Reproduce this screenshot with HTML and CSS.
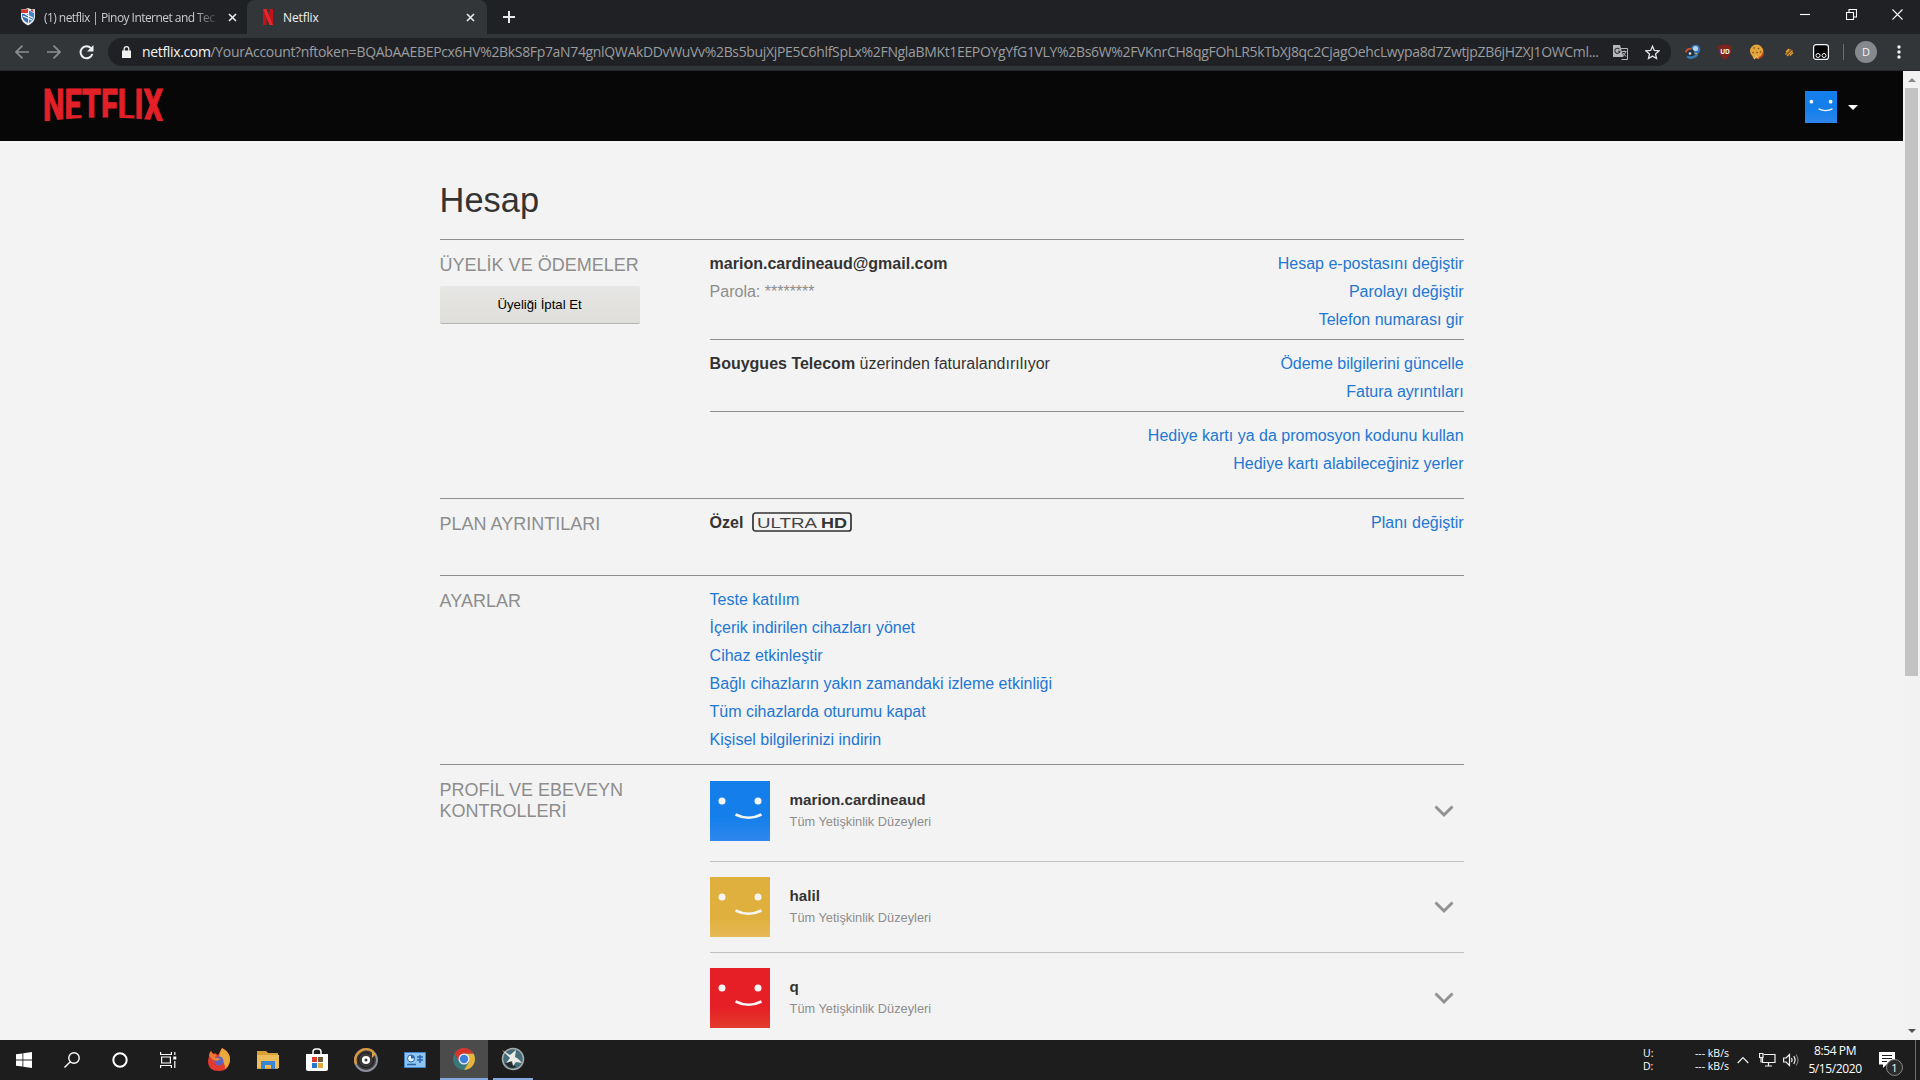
FILE: index.html
```html
<!DOCTYPE html>
<html lang="tr">
<head>
    <meta charset="UTF-8">
    <title>Netflix</title>
    <link rel="stylesheet" href="styles.css">
</head>
<body>
    <!-- tabs -->
    <div class="tabs">
        <div class="tab">
            <svg class="favicon" width="16" height="18" viewBox="0 0 16 18">
                <path d="M1 1Q4 2 8 0q4 2 7 1v8q0 5-7 8.500Q1 14 1 9z" fill="#e8e8ea"/>
                <path d="M2 6h6v9q-6-3-6-8z" fill="#2f6fb5"/>
                <path d="M9 3h5v5q0 4-5 7z" fill="#3e87c9"/>
                <path d="M1 1q3 1 7 0v4H1z" fill="#d8352c"/>
                <path d="M9 1.500l5 3M3 8l9 4M5 6l8 4" stroke="#f4f4f4" stroke-width="1.300"/>
                <path d="M11 2l2 1" stroke="#d8352c" stroke-width="1.500"/>
            </svg>
            <span class="tab-title fade">(1) netflix | Pinoy Internet and Tec</span>
            <svg class="close" width="9" height="9" viewBox="0 0 9 9"><path d="M1 1l7 7M8 1l-7 7"/></svg>
        </div>
        <div class="tab on">
            <svg class="favicon" width="16" height="16" viewBox="0 0 16 16">
                <path d="M3 0h3.500v16H3zM9.500 0H13v16H9.500z" fill="#c11119"/>
                <path d="M3 0h3.500L13 16H9.500z" fill="#e5252c"/>
            </svg>
            <span class="tab-title">Netflix</span>
            <svg class="close" width="9" height="9" viewBox="0 0 9 9"><path d="M1 1l7 7M8 1l-7 7"/></svg>
        </div>
        <svg class="plus" width="12" height="12" viewBox="0 0 12 12"><path d="M6 0v12M0 6h12"/></svg>
        <div class="win-btn">
            <svg width="11" height="11" viewBox="0 0 11 11"><path d="M0 5.500h10"/></svg>
            <svg width="11" height="11" viewBox="0 0 11 11"><path d="M.5 3.500h7v7h-7zM3 3V.5h7.500V8H8"/></svg>
            <svg width="11" height="11" viewBox="0 0 11 11"><path d="M.5.5l10 10M10.500.5l-10 10"/></svg>
        </div>
    </div>

    <!-- address bar -->
    <div class="toolbar">
        <svg class="nav dim" width="14" height="14" viewBox="0 0 14 14"><path d="M14 7H1M7.500.7L1 7l6.500 6.300"/></svg>
        <svg class="nav dim" width="14" height="14" viewBox="0 0 14 14"><path d="M0 7h13M6.500.7L13 7l-6.500 6.300"/></svg>
        <svg class="nav reload" width="15" height="15" viewBox="0 0 15 15"><path d="M12 3.200A6 6 0 1 0 13.300 9"/><path class="solid" d="M14.500 0v6.500H8z"/></svg>
        <div class="omnibox">
            <svg class="lock" width="9" height="12" viewBox="0 0 9 12"><path d="M0 4.500h9V12H0z" fill="#f1f1f1"/><path d="M2.200 5V3a2.300 2.300 0 0 1 4.600 0v2" fill="none" stroke="#f1f1f1" stroke-width="1.300"/></svg>
            <div class="url"><b>netflix.com</b>/YourAccount?nftoken=BQAbAAEBEPcx6HV%2BkS8Fp7aN74gnlQWAkDDvWuVv%2Bs5bujXjPE5C6hlfSpLx%2FNglaBMKt1EEPOYgYfG1VLY%2Bs6W%2FVKnrCH8qgFOhLR5kTbXJ8qc2CjagOehcLwypa8d7ZwtjpZB6jHZXJ1OWCml...</div>
            <svg class="translate" width="15" height="15" viewBox="0 0 15 15">
                <path d="M5.500 3.500h9v11h-6" fill="none" stroke="#b5b7b9"/>
                <path d="M0 0h7l3.500 12H0z" fill="#b5b7b9"/>
                <path d="M6.500 4.200A2.600 2.600 0 1 0 7 6.300H4.800" fill="none" stroke="#35363a" stroke-width="1.100"/>
                <path d="M9 6.500h4.500M11.200 5.500v1M12.700 6.500q-.5 3-3 4.500M10 8l3 3.500" fill="none" stroke="#b5b7b9"/>
            </svg>
            <svg class="star" width="15" height="15" viewBox="0 0 15 15"><path d="M7.500 1.200l1.800 4.300 4.700.4-3.500 3.100 1 4.500-4-2.400-4 2.400 1-4.500L1 5.900l4.700-.4z" fill="none" stroke="#e3e4e6" stroke-width="1.300"/></svg>
        </div>
        <div class="exts">
            <svg width="16" height="16" viewBox="0 0 16 16">
                <circle cx="10.500" cy="5.500" r="4.800" fill="#2f74bd"/><circle cx="10.500" cy="4.500" r="2.600" fill="#b9d6ee"/>
                <circle cx="5" cy="9.500" r="4.500" fill="#28323d"/><path d="M.8 8.500q1-4 5-3.500" stroke="#d2572d" stroke-width="1.800" fill="none"/>
                <path d="M2 12.500q5 3 10.500-2" stroke="#347db5" stroke-width="2.500" fill="none"/><circle cx="5" cy="9.500" r="1.300" fill="#dbe5ec"/>
                <path d="M9.500 9l3 1" stroke="#d9a845" stroke-width="1.300"/>
            </svg>
            <svg width="16" height="16" viewBox="0 0 16 16">
                <path d="M8 0q3 1.600 7 1.800Q15 12 8 16 1 12 1 1.800 5 1.600 8 0z" fill="#7d241c"/>
                <text x="8" y="9.500" text-anchor="middle" class="ublock">UD</text>
            </svg>
            <svg width="16" height="16" viewBox="0 0 16 16">
                <circle cx="8.500" cy="8.500" r="6.500" fill="#c4411f"/>
                <circle cx="7.500" cy="7" r="6.500" fill="#e2a53c"/>
                <path d="M4 12.500l1.500 2 2-2.500 2 2.500" fill="none" stroke="#f0c060" stroke-width="1.200"/>
                <path d="M5 4h.1M9.500 4.500h.1M8 8.500h.1M4 8.500h.1M11.500 8h.1" stroke="#7d4a1a" stroke-width="1.600" stroke-linecap="round"/>
            </svg>
            <svg width="16" height="16" viewBox="0 0 16 16">
                <path d="M4.500 10.500l5-5M6 12l5.500-5.500M5 8l3-3M9 11.500l3-3" stroke="#e79a32" stroke-width="1.400"/>
                <path d="M6 9.500l4-4" stroke="#8a4a18"/>
            </svg>
            <svg width="16" height="16" viewBox="0 0 16 16">
                <rect x=".6" y=".6" width="14.800" height="14.800" rx="2.500" fill="#050505" stroke="#f5f5f5" stroke-width="1.200"/>
                <circle cx="5" cy="11.500" r="2" fill="none" stroke="#f5f5f5"/><circle cx="11" cy="11.500" r="2" fill="none" stroke="#f5f5f5"/>
            </svg>
        </div>
        <div class="divider"></div>
        <div class="user">D</div>
        <svg class="dots" width="4" height="14" viewBox="0 0 4 14"><circle cx="2" cy="2" r="1.700"/><circle cx="2" cy="7" r="1.700"/><circle cx="2" cy="12" r="1.700"/></svg>
    </div>

    <div class="view">
        <div class="page">
            <div class="header">
                <svg class="logo" width="120" height="34" viewBox="0 0 120 34">
                    <text x="-1" y="33" textLength="120" lengthAdjust="spacingAndGlyphs">NETFLIX</text>
                </svg>
                <div class="account">
                    <svg class="face" width="32" height="32" viewBox="0 0 60 60"><use href="#smile"/></svg>
                    <i class="caret"></i>
                </div>
            </div>

            <div class="content">
                <h1>Hesap</h1>

                <div class="section">
                    <div class="side">
                        <h2>ÜYELİK VE ÖDEMELER</h2>
                        <button class="cancel">Üyeliği İptal Et</button>
                    </div>
                    <div class="main">
                        <div class="row">
                            <ul>
                                <li><b>marion.cardineaud@gmail.com</b></li>
                                <li class="gray">Parola: ********</li>
                            </ul>
                            <ul class="right">
                                <li><a>Hesap e-postasını değiştir</a></li>
                                <li><a>Parolayı değiştir</a></li>
                                <li><a>Telefon numarası gir</a></li>
                            </ul>
                        </div>
                        <div class="row">
                            <ul>
                                <li><b>Bouygues Telecom</b> üzerinden faturalandırılıyor</li>
                            </ul>
                            <ul class="right">
                                <li><a>Ödeme bilgilerini güncelle</a></li>
                                <li><a>Fatura ayrıntıları</a></li>
                            </ul>
                        </div>
                        <div class="row gift">
                            <ul class="right">
                                <li><a>Hediye kartı ya da promosyon kodunu kullan</a></li>
                                <li><a>Hediye kartı alabileceğiniz yerler</a></li>
                            </ul>
                        </div>
                    </div>
                </div>

                <div class="section">
                    <div class="side"><h2>PLAN AYRINTILARI</h2></div>
                    <div class="main">
                        <div class="row plan">
                            <ul>
                                <li class="plan-name"><b>Özel</b>
                                    <svg class="uhd" width="100" height="20" viewBox="0 0 100 20">
                                        <rect x="1" y="1" width="98" height="18" rx="2.500"/>
                                        <text x="5" y="15.500" textLength="60" lengthAdjust="spacingAndGlyphs">ULTRA</text>
                                        <text x="69" y="15.500" textLength="26" lengthAdjust="spacingAndGlyphs" class="hd">HD</text>
                                    </svg>
                                </li>
                            </ul>
                            <ul class="right">
                                <li><a>Planı değiştir</a></li>
                            </ul>
                        </div>
                    </div>
                </div>

                <div class="section">
                    <div class="side"><h2>AYARLAR</h2></div>
                    <div class="main">
                        <div class="row settings">
                            <ul>
                                <li><a>Teste katılım</a></li>
                                <li><a>İçerik indirilen cihazları yönet</a></li>
                                <li><a>Cihaz etkinleştir</a></li>
                                <li><a>Bağlı cihazların yakın zamandaki izleme etkinliği</a></li>
                                <li><a>Tüm cihazlarda oturumu kapat</a></li>
                                <li><a>Kişisel bilgilerinizi indirin</a></li>
                            </ul>
                        </div>
                    </div>
                </div>

                <div class="section">
                    <div class="side"><h2>PROFİL VE EBEVEYN KONTROLLERİ</h2></div>
                    <div class="main">
                        <div class="profile first">
                            <svg class="face" width="60" height="60" viewBox="0 0 60 60">
                                <g id="smile">
                                    <circle cx="12" cy="20" r="3.500"/><circle cx="48" cy="20" r="3.500"/>
                                    <path d="M25.500 33.500q13 6.500 26 0"/>
                                </g>
                            </svg>
                            <div class="name"><b>marion.cardineaud</b><span>Tüm Yetişkinlik Düzeyleri</span></div>
                            <svg class="arrow" width="20" height="13" viewBox="0 0 20 13"><path d="M1.500 1.500L10 10l8.500-8.500"/></svg>
                        </div>
                        <div class="profile">
                            <svg class="face yellow" width="60" height="60" viewBox="0 0 60 60"><use href="#smile"/></svg>
                            <div class="name"><b>halil</b><span>Tüm Yetişkinlik Düzeyleri</span></div>
                            <svg class="arrow" width="20" height="13" viewBox="0 0 20 13"><path d="M1.500 1.500L10 10l8.500-8.500"/></svg>
                        </div>
                        <div class="profile">
                            <svg class="face red" width="60" height="60" viewBox="0 0 60 60"><use href="#smile"/></svg>
                            <div class="name"><b>q</b><span>Tüm Yetişkinlik Düzeyleri</span></div>
                            <svg class="arrow" width="20" height="13" viewBox="0 0 20 13"><path d="M1.500 1.500L10 10l8.500-8.500"/></svg>
                        </div>
                    </div>
                </div>
            </div>
        </div>
        <div class="scrollbar">
            <i class="up"></i>
            <div class="thumb"></div>
            <i class="down"></i>
        </div>
    </div>

    <!-- windows taskbar -->
    <div class="taskbar">
        <div class="system">
            <div class="task">
                <svg width="16" height="16" viewBox="0 0 16 16"><path fill="#fff" d="M0 2.300L6.500 1.400v6.200H0zM7.300 1.300L16 0v7.600H7.300zM0 8.400h6.500v6.200L0 13.700zM7.300 8.400H16V16l-8.700-1.300z"/></svg>
            </div>
            <div class="task">
                <svg width="16" height="16" viewBox="0 0 16 16" fill="none" stroke="#fff" stroke-width="1.400"><circle cx="10" cy="6" r="5.200"/><path d="M6.300 9.700L.5 15.500"/></svg>
            </div>
            <div class="task">
                <svg width="16" height="16" viewBox="0 0 16 16" fill="none" stroke="#fff" stroke-width="2"><circle cx="8" cy="8" r="6.700"/></svg>
            </div>
            <div class="task">
                <svg width="17" height="16" viewBox="0 0 17 16" fill="none" stroke="#fff" stroke-width="1.200"><path d="M.6 0v2.500h10.800V0M.6 16v-2.500h10.800V16M1.600 5h8.800v6H1.600zM14.800 0v3M14.800 9v7"/><path d="M13.300 4.500h3v3h-3z" fill="#fff" stroke="none"/></svg>
            </div>
        </div>
        <div class="task">
            <svg width="24" height="24" viewBox="0 0 24 24">
                <path d="M2 8q0-3 2-5l2 3 2-1 3 2 4-7q7 3 8 10 0 13-11 13T1 13z" fill="#e23a2e"/>
                <path d="M15 0q9 5 8 13-1 5-5 8 0-7-4-9-4-3 1-12z" fill="#eaa93c"/>
                <path d="M2 8q0-3 2-5l2 3 4 1-3 3 1 3z" fill="#ea7a35"/>
                <circle cx="12" cy="13" r="4.500" fill="#5b63c4"/>
                <path d="M4 10q4-1 7 0l3 1-4 2-3-1z" fill="#e88835"/>
            </svg>
        </div>
        <div class="task">
            <svg width="22" height="20" viewBox="0 0 22 20">
                <path d="M0 1h9l2 2h10v16H0z" fill="#d9a03a"/><path d="M0 5h22v13H0z" fill="#ecbd58"/>
                <path d="M4 19v-8h14v8h-4v-4H8v4z" fill="#3a86d4"/>
            </svg>
        </div>
        <div class="task">
            <svg width="24" height="24" viewBox="0 0 24 24">
                <path d="M8 6V4q0-3 3-3h2q3 0 3 3v2" fill="none" stroke="#fff" stroke-width="1.500"/>
                <path d="M1 6h22v15q0 2-2 2H3q-2 0-2-2z" fill="#fff"/>
                <path d="M7 9h5v5H7z" fill="#da3b2b"/><path d="M13 9h5v5h-5z" fill="#6e5a36"/><path d="M7 15h5v5H7z" fill="#2878d0"/><path d="M13 15h5v5h-5z" fill="#e0aa3a"/>
            </svg>
        </div>
        <div class="task">
            <svg width="26" height="26" viewBox="0 0 26 26">
                <circle cx="13" cy="13" r="11" fill="#3a3a3a" stroke="#8c8f9e" stroke-width="2"/>
                <path d="M3 17A11 11 0 0 1 20 4.500" fill="none" stroke="#d9963a" stroke-width="2.500"/>
                <circle cx="13" cy="13" r="7.500" fill="none" stroke="#1c1c1c"/>
                <circle cx="13" cy="13" r="2.800" fill="none" stroke="#fff" stroke-width="2.600"/>
                <path d="M19 4l4 3-4 4z" fill="#e0a03e"/>
            </svg>
        </div>
        <div class="task">
            <svg width="22" height="16" viewBox="0 0 22 16">
                <path d="M.5.5h21v15H.5z" fill="#8fc3f0" stroke="#3f84cd"/>
                <circle cx="7" cy="6.500" r="3.500" fill="#e5f2fc" stroke="#2765ad"/><path d="M7 6.500V3a3.500 3.500 0 0 1 3.500 3.500z" fill="#2765ad"/>
                <path d="M13 5h6M13 8h6M16 3v8M3 12.500h9" stroke="#2765ad" stroke-width="1.500"/>
            </svg>
        </div>
        <div class="task current">
            <svg width="24" height="24" viewBox="0 0 24 24">
                <circle cx="12" cy="12" r="11" fill="#38787b"/>
                <path d="M12 6.500h9.500A11 11 0 0 1 12 23l5-8z" fill="#e6b43c"/>
                <path d="M12 6.500H21.500A11 11 0 0 0 2.500 6.500L7 14z" fill="#d8332a"/>
                <circle cx="12" cy="12" r="5.500" fill="#f0f0f0"/><circle cx="12" cy="12" r="4.200" fill="#3f7fdc"/>
            </svg>
        </div>
        <div class="task opened">
            <svg width="24" height="24" viewBox="0 0 24 24">
                <circle cx="12" cy="12" r="10.500" fill="#426c7b" stroke="#a8aba8" stroke-width="1.500"/>
                <path d="M4 16q3-2 6-1l5 5q-7 3-11-4z" fill="#252b2c"/>
                <path d="M1 3l8 5 6-5-1 7q3 1 7 6l-6-1-3 4-1-5-6 2 4-5z" fill="#eceae2"/>
            </svg>
        </div>

        <div class="tray">
            <div class="net">
                <span>U:</span><span>--- kB/s</span>
                <span>D:</span><span>--- kB/s</span>
            </div>
            <svg class="chev" width="12" height="8" viewBox="0 0 12 8"><path d="M.7 7L6 1.500 11.300 7"/></svg>
            <svg class="monitor" width="17" height="14" viewBox="0 0 17 14"><path d="M5 1.500h11v8H3.500V5M.5.500h3.500v4H.5zM2 4.500v5M9.500 9.500V13M6 13h7"/></svg>
            <svg class="sound" width="17" height="14" viewBox="0 0 17 14"><path d="M.6 5h2.500L6.500 1.500v11L3.100 9H.6zM8.500 5q1.300 2 0 4M10.700 3.200q2.800 3.800 0 7.600"/><path class="off" d="M13 1.500q4 5.500 0 11"/></svg>
            <div class="clock"><span>8:54 PM</span><span>5/15/2020</span></div>
            <div class="notify">
                <svg width="16" height="16" viewBox="0 0 16 16"><path d="M0 0h16v12.500H7.500L4 16v-3.500H0z" fill="#fff"/><path d="M3 3.500h10M3 6.500h10M3 9.500h5" stroke="#1d1d1d"/></svg>
                <span class="badge">1</span>
            </div>
            <i class="desktop"></i>
        </div>
    </div>
</body>
</html>
```

FILE: styles.css
```css
*{
    box-sizing: border-box;
}
body{
    margin: 0;
    width: 1920px;
    height: 1080px;
    overflow: hidden;
    display: flex;
    flex-direction: column;
    background: #f3f3f3;
    font-family: "Liberation Sans", Arial, sans-serif;
}
svg{
    display: block;
    flex-shrink: 0;
}
ul{
    list-style: none;
    padding: 0;
    margin: 0;
}

/* tabs */
.tabs{
    height: 34px;
    flex-shrink: 0;
    background: #202124;
    display: flex;
    align-items: center;
    font: 12px "Open Sans", "Noto Sans", sans-serif;
    color: #c9cbce;
}
.tab{
    height: 34px;
    width: 247px;
    padding: 0 10px 0 20px;
    display: flex;
    align-items: center;
}
.tab.on{
    width: 240px;
    padding: 0 12px 0 13px;
    background: #323639;
    border-radius: 8px 8px 0 0;
    color: #f1f1f1;
}
.favicon{
    margin-right: 8px;
}
.tab.on .favicon{
    margin-right: 7px;
}
.tab-title{
    flex: 1;
    white-space: nowrap;
    overflow: hidden;
    letter-spacing: -0.1px;
}
.tab .fade{
    flex: none;
    width: 176px;
    margin-right: 8px;
    letter-spacing: -0.55px;
    -webkit-mask-image: linear-gradient(to right, #000 150px, transparent);
}
.close, .plus, .win-btn svg{
    fill: none;
    stroke: #e8eaed;
    stroke-width: 1.6;
}
.plus{
    margin-left: 16px;
    stroke-width: 2;
}
.win-btn{
    margin-left: auto;
    padding: 0 17px 6px 0;
    display: flex;
    gap: 35px;
}
.win-btn svg{
    stroke: #fff;
    stroke-width: 1.1;
}

/* address bar */
.toolbar{
    height: 37px;
    flex-shrink: 0;
    background: #323639;
    border-bottom: 1px solid #26282b;
    display: flex;
    align-items: center;
    padding: 0 19px 0 15px;
}
.nav{
    margin-right: 18px;
    fill: none;
    stroke: #f1f1f1;
    stroke-width: 2;
}
.nav.dim{
    stroke: #8c8f92;
    stroke-width: 1.7;
}
.reload{
    margin-right: 14px;
}
.reload .solid{
    fill: #f1f1f1;
    stroke: none;
}
.omnibox{
    width: 1563px;
    height: 28px;
    border-radius: 14px;
    background: #202124;
    display: flex;
    align-items: center;
    padding: 0 11px 0 14px;
}
.lock{
    margin-right: 11px;
}
.url{
    width: 1460px;
    margin-right: 12px;
    white-space: nowrap;
    overflow: hidden;
    font: 14px/20px "Open Sans", "Noto Sans", sans-serif;
    letter-spacing: -0.34px;
    color: #9a9da0;
}
.url b{
    font-weight: 400;
    color: #f5f5f5;
}
.star{
    margin-left: 17px;
}
.exts{
    display: flex;
    gap: 16px;
    margin-left: 14px;
}
.ublock{
    font: bold 6.5px "Open Sans", sans-serif;
    fill: #fff;
}
.divider{
    width: 1px;
    height: 16px;
    margin: 0 11px 0 14px;
    background: #6b6e71;
}
.user{
    width: 22px;
    height: 22px;
    border-radius: 50%;
    background: #85888c;
    color: #f4f4f4;
    font: 11px/22px "Open Sans", sans-serif;
    text-align: center;
}
.dots{
    margin-left: auto;
    fill: #f1f1f1;
}

/* page */
.view{
    flex: 1;
    min-height: 0;
    display: flex;
    overflow: hidden;
}
.page{
    width: 1903px;
    overflow: hidden;
}
.header{
    height: 70px;
    background: #070707;
    display: flex;
    align-items: center;
    justify-content: space-between;
    padding: 0 45px 0 44px;
}
.logo{
    margin-bottom: 3px;
    clip-path: path("M0 0H120V34Q60 26 0 34Z");
}
.logo text{
    font: bold 45px Roboto, sans-serif;
    fill: #e32028;
    stroke: #e32028;
    stroke-width: 1.2;
}
.account{
    display: flex;
    align-items: center;
    gap: 11px;
    padding-top: 2px;
}
.caret{
    border: 5px solid transparent;
    border-top-color: #fff;
    border-bottom: 0;
}
.face{
    background: linear-gradient(#147fea 60%, #2f86ee);
    fill: #f5f5f5;
}
#smile path{
    fill: none;
    stroke: #f5f5f5;
    stroke-width: 2.6;
}
.face.yellow{
    background: linear-gradient(#e0b03e 70%, #e6b957);
}
.face.red{
    background: linear-gradient(#e61f27 65%, #e23a2a);
}

.content{
    width: 1024px;
    margin-left: 439.6px;
    color: #333;
}
h1{
    margin: 0;
    padding-top: 39px;
    height: 98px;
    font-size: 34.4px;
    line-height: 40px;
    font-weight: 400;
}
h2{
    margin: 0;
    font-size: 18px;
    line-height: 21px;
    font-weight: 400;
    color: #8d8d8d;
}
.section{
    display: flex;
    border-top: 1px solid #8f8f8f;
}
.side{
    width: 270px;
    padding: 15px 60px 0 0;
}
.cancel{
    display: block;
    width: 200px;
    height: 38px;
    margin-top: 10px;
    padding: 0;
    border: 0;
    border-bottom: 1px solid #b5b5b3;
    border-radius: 2px;
    background: linear-gradient(#e6e6e4, #dfdedb);
    font: 13.2px "Liberation Sans", Arial, sans-serif;
    color: #000;
}
.main{
    flex: 1;
}
.row{
    display: flex;
    padding: 10px 0 5px;
    font-size: 16px;
    line-height: 28px;
}
.row + .row{
    border-top: 1px solid #8f8f8f;
}
.row.gift{
    padding-bottom: 20px;
}
.row.plan{
    padding-bottom: 38px;
}
.row.settings{
    padding-bottom: 10px;
}
.right{
    margin-left: auto;
    text-align: right;
}
.row a{
    color: #2277d3;
}
.gray{
    color: #8d8d8d;
}
.plan-name{
    display: flex;
    align-items: center;
}
.uhd{
    margin: 0 0 2px 9px;
}
.uhd rect{
    fill: none;
    stroke: #333;
    stroke-width: 1.7;
}
.uhd text{
    font: 15px "Liberation Sans", sans-serif;
    fill: #444;
}
.uhd .hd{
    font-weight: bold;
    fill: #333;
}

.profile{
    display: flex;
    align-items: center;
    padding: 15px 10px 15px 0;
}
.profile.first{
    padding: 16px 10px 20px 0;
}
.profile + .profile{
    border-top: 1px solid #c2c2c2;
}
.name{
    margin-left: 20px;
    display: flex;
    flex-direction: column;
    font-size: 12.8px;
    line-height: 22px;
    color: #8d8d8d;
}
.name b{
    font-size: 15.2px;
    color: #333;
}
.arrow{
    margin-left: auto;
    fill: none;
    stroke: #929292;
    stroke-width: 3;
}

/* scrollbar */
.scrollbar{
    width: 17px;
    background: #f2f2f2;
    display: flex;
    flex-direction: column;
    align-items: center;
    padding: 7px 0;
}
.thumb{
    width: 13px;
    height: 588px;
    margin-top: 6px;
    background: #c3c3c3;
}
.up, .down{
    border: 4px solid transparent;
}
.up{
    border-bottom-color: #8b8b8b;
    border-top: 0;
}
.down{
    margin-top: auto;
    border-top-color: #505050;
    border-bottom: 0;
}

/* windows taskbar */
.taskbar{
    height: 40px;
    flex-shrink: 0;
    background: #1d1d1d;
    display: flex;
    font-family: "Open Sans", "Noto Sans", sans-serif;
    color: #fff;
}
.system{
    display: flex;
    margin-right: 3px;
}
.task{
    width: 48px;
    height: 40px;
    margin-right: 1px;
    display: flex;
    align-items: center;
    justify-content: center;
}
.system .task{
    margin-right: 0;
}
.task.current{
    background: #4b4b4b;
    border-bottom: 2px solid #84a9de;
    margin-right: 5px;
}
.task.opened{
    width: 40px;
    border-bottom: 2px solid #84a9de;
}
.tray{
    margin-left: auto;
    display: flex;
    align-items: center;
    height: 40px;
}
.net{
    display: grid;
    grid-template-columns: 44px 42px;
    font-size: 10.5px;
    line-height: 13px;
    white-space: nowrap;
    text-align: right;
}
.net span:nth-child(odd){
    text-align: left;
}
.tray svg{
    fill: none;
    stroke: #f1f1f1;
    stroke-width: 1.2;
}
.chev{
    margin-left: 8px;
}
.monitor{
    margin-left: 10px;
}
.sound{
    margin-left: 7px;
}
.sound .off{
    stroke: #777;
}
.clock{
    width: 56px;
    margin-left: 7px;
    font-size: 12px;
    line-height: 18px;
    letter-spacing: -0.4px;
    display: flex;
    flex-direction: column;
    align-items: center;
}
.notify{
    position: relative;
    margin-left: 16px;
}
.tray .notify svg{
    stroke: none;
}
.badge{
    position: absolute;
    left: 7px;
    top: 7px;
    width: 17px;
    height: 17px;
    border: 1px solid #8a8a8a;
    border-radius: 50%;
    background: #2b2b2b;
    font-size: 11px;
    line-height: 15px;
    text-align: center;
}
.desktop{
    width: 1px;
    height: 40px;
    margin: 0 4px 0 20px;
    background: #6b6b6b;
}
```
